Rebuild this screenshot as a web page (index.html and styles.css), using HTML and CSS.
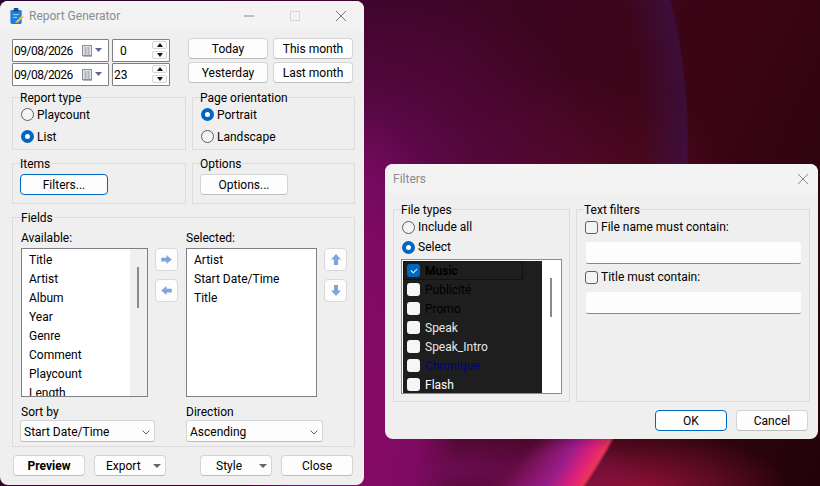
FILE: index.html
```html
<!DOCTYPE html>
<html lang="en">
<head>
  <meta charset="UTF-8">
  <title>Report Generator</title>
  <link rel="stylesheet" href="styles.css">
</head>
<body>
  <div class="desktop">
    <div class="lens"></div>
    <div class="lens-glow"></div>

    <!-- main window -->
    <div class="window report-window">
      <div class="titlebar">
        <svg class="app-icon" width="14" height="16" viewBox="0 0 14 17">
          <rect x="0" y="2" width="12" height="15" rx="1.500" fill="#1f7fd6"/>
          <rect x="3.500" y="0" width="5" height="4" rx="1" fill="#12508f"/>
          <path d="M3 7h6M3 10h4" stroke="#bcdcf5" stroke-width="1"/>
          <path d="M6 14l6-6 2 1.500-6 6-2.500 .5z" fill="#f6b73c"/>
        </svg>
        <span class="title">Report Generator</span>
        <div class="caption-btns">
          <svg width="12" height="12" viewBox="0 0 12 12"><path d="M1 6h10" stroke="#8a8a8a"/></svg>
          <svg width="12" height="12" viewBox="0 0 12 12"><rect x="1.500" y="1.500" width="9" height="9" fill="none" stroke="#d6d6d6"/></svg>
          <svg width="12" height="12" viewBox="0 0 12 12"><path d="M1 1l10 10M11 1L1 11" stroke="#777"/></svg>
        </div>
      </div>

      <div class="report-body">
        <div class="date-row">
          <div class="date-inputs">
            <div class="date-line">
              <div class="field date-field"><span class="date-text">09/08/2026</span>
                <svg class="cal" width="21" height="12" viewBox="0 0 21 12">
                  <rect x="0.500" y="0.500" width="9" height="10" fill="#dfe3ea" stroke="#8b8f99"/>
                  <path d="M2 3h6M2 5h6M2 7h6M2 9h6M3.500 2v8M6.500 2v8" stroke="#a9adb8" stroke-width=".8"/>
                  <path d="M10 11.500h-9" stroke="#b5b5b5"/>
                  <path d="M13 3h7l-3.500 4z" fill="#5a6a8c"/>
                </svg>
              </div>
              <div class="field spin-field"><span class="hour-zero">0</span>
                <div class="spin"><div class="spin-btn"><i class="up"></i></div><div class="spin-btn"><i class="down"></i></div></div>
              </div>
            </div>
            <div class="date-line">
              <div class="field date-field"><span class="date-text">09/08/2026</span>
                <svg class="cal" width="21" height="12" viewBox="0 0 21 12">
                  <rect x="0.500" y="0.500" width="9" height="10" fill="#dfe3ea" stroke="#8b8f99"/>
                  <path d="M2 3h6M2 5h6M2 7h6M2 9h6M3.500 2v8M6.500 2v8" stroke="#a9adb8" stroke-width=".8"/>
                  <path d="M10 11.500h-9" stroke="#b5b5b5"/>
                  <path d="M13 3h7l-3.500 4z" fill="#5a6a8c"/>
                </svg>
              </div>
              <div class="field spin-field"><span>23</span>
                <div class="spin"><div class="spin-btn"><i class="up"></i></div><div class="spin-btn"><i class="down"></i></div></div>
              </div>
            </div>
          </div>
          <div class="quick-dates">
            <button class="btn">Today</button>
            <button class="btn">This month</button>
            <button class="btn">Yesterday</button>
            <button class="btn">Last month</button>
          </div>
        </div>

        <div class="group-row">
          <fieldset class="group radio-group">
            <legend>Report type</legend>
            <label class="radio"><i class="radio-mark"></i>Playcount</label>
            <label class="radio"><i class="radio-mark on"></i>List</label>
          </fieldset>
          <fieldset class="group radio-group">
            <legend>Page orientation</legend>
            <label class="radio"><i class="radio-mark on"></i>Portrait</label>
            <label class="radio"><i class="radio-mark"></i>Landscape</label>
          </fieldset>
        </div>

        <div class="group-row items-row">
          <fieldset class="group button-group">
            <legend>Items</legend>
            <button class="btn wide focus">Filters...</button>
          </fieldset>
          <fieldset class="group button-group">
            <legend>Options</legend>
            <button class="btn wide">Options...</button>
          </fieldset>
        </div>

        <fieldset class="group fields-group">
          <legend>Fields</legend>
          <div class="fields-grid">
            <div class="col-label">Available:</div>
            <div></div>
            <div class="col-label">Selected:</div>
            <div></div>

            <div class="listbox available">
              <ul>
                <li>Title</li><li>Artist</li><li>Album</li><li>Year</li>
                <li>Genre</li><li>Comment</li><li>Playcount</li><li>Length</li>
              </ul>
              <div class="scroll"><div class="thumb"></div></div>
            </div>
            <div class="move-btns">
              <button class="icon-btn"><svg width="11" height="9" viewBox="0 0 14 12"><path d="M0 3.500h7V0l7 6-7 6V8.500H0z" fill="#7ea6dc"/></svg></button>
              <button class="icon-btn"><svg width="11" height="9" viewBox="0 0 14 12"><path d="M14 3.500H7V0L0 6l7 6V8.500h7z" fill="#7ea6dc"/></svg></button>
            </div>
            <div class="listbox selected">
              <ul><li>Artist</li><li>Start Date/Time</li><li>Title</li></ul>
            </div>
            <div class="move-btns">
              <button class="icon-btn"><svg width="10" height="11" viewBox="0 0 12 14" preserveAspectRatio="none"><path d="M3.500 14V7H0l6-7 6 7H8.500v7z" fill="#7ea6dc"/></svg></button>
              <button class="icon-btn"><svg width="10" height="11" viewBox="0 0 12 14" preserveAspectRatio="none"><path d="M3.500 0v7H0l6 7 6-7H8.500V0z" fill="#7ea6dc"/></svg></button>
            </div>

            <div class="sort-col">
              <div class="col-label">Sort by</div>
              <div class="select sort-select">Start Date/Time<svg width="8" height="5" viewBox="0 0 8 5"><path d="M.5 .5L4 4 7.500 .5" fill="none" stroke="#666"/></svg></div>
            </div>
            <div></div>
            <div class="sort-col span-2">
              <div class="col-label">Direction</div>
              <div class="select direction-select">Ascending<svg width="8" height="5" viewBox="0 0 8 5"><path d="M.5 .5L4 4 7.500 .5" fill="none" stroke="#666"/></svg></div>
            </div>
          </div>
        </fieldset>

        <div class="footer-btns">
          <button class="btn foot bold">Preview</button>
          <button class="btn foot split">Export<i class="caret"></i></button>
          <button class="btn foot split style-btn">Style<i class="caret"></i></button>
          <button class="btn foot">Close</button>
        </div>
      </div>
    </div>

    <!-- filters dialog -->
    <div class="window filters-window">
      <div class="titlebar">
        <span class="title">Filters</span>
        <svg class="dialog-close" width="12" height="12" viewBox="0 0 12 12"><path d="M1 1l10 10M11 1L1 11" stroke="#8a8a8a"/></svg>
      </div>
      <div class="filters-body">
        <div class="filters-groups">
          <fieldset class="group types-group">
            <legend>File types</legend>
            <label class="radio"><i class="radio-mark"></i>Include all</label>
            <label class="radio"><i class="radio-mark on"></i>Select</label>
            <div class="listbox types-list">
              <ul class="dark-list">
                <li class="row-selected"><i class="check on"></i><b>Music</b></li>
                <li class="ink-black"><i class="check"></i>Publicité</li>
                <li class="ink-black"><i class="check"></i>Promo</li>
                <li><i class="check"></i>Speak</li>
                <li><i class="check"></i>Speak_Intro</li>
                <li class="ink-blue"><i class="check"></i>Chronique</li>
                <li class="ink-white"><i class="check"></i>Flash</li>
              </ul>
              <div class="scroll"><div class="thumb types-thumb"></div></div>
            </div>
          </fieldset>
          <fieldset class="group text-group">
            <legend>Text filters</legend>
            <label class="checkline"><i class="check outline"></i>File name must contain:</label>
            <div class="text-input"></div>
            <label class="checkline second"><i class="check outline"></i>Title must contain:</label>
            <div class="text-input"></div>
          </fieldset>
        </div>
        <div class="dialog-btns">
          <button class="btn foot focus">OK</button>
          <button class="btn foot">Cancel</button>
        </div>
      </div>
    </div>
  </div>
</body>
</html>
```

FILE: styles.css
```css
* {
  box-sizing: border-box;
  margin: 0;
  padding: 0;
  font-family: Roboto, sans-serif;
  font-size: 12px;
}

body {
  width: 820px;
  height: 486px;
  overflow: hidden;
}

/* wallpaper */
.desktop {
  position: relative;
  width: 820px;
  height: 486px;
  overflow: hidden;
  background:
    radial-gradient(ellipse 150px 60px at 640px 490px, #8e1036 0%, rgba(120, 15, 45, 0.6) 55%, rgba(90, 10, 30, 0) 100%),
    radial-gradient(ellipse 110px 320px at 350px 420px, #880a66 0%, #7e0a62 60%, rgba(110, 8, 85, 0) 100%),
    radial-gradient(ellipse 200px 60px at 460px 470px, rgba(110, 12, 85, 0.9) 0%, rgba(90, 12, 70, 0) 100%),
    radial-gradient(ellipse 90px 60px at 570px 500px, #a8188a 0%, rgba(130, 20, 110, 0.7) 55%, rgba(100, 20, 90, 0) 100%),
    radial-gradient(ellipse 250px 230px at 360px 190px, #6c0a5c 0%, rgba(90, 8, 70, 0.65) 50%, rgba(60, 5, 40, 0) 100%),
    radial-gradient(ellipse 170px 130px at 570px 200px, rgba(85, 10, 40, 0.9) 0%, rgba(70, 8, 30, 0) 100%),
    linear-gradient(115deg, #2c0430 0%, #3c0522 45%, #3c0514 72%, #22030a 100%);
}

.lens {
  position: absolute;
  inset: 0;
  background:
    radial-gradient(circle 610px at 79px 144px, rgba(60, 25, 100, 0) 92%, rgba(60, 25, 100, 0.45) 99.600%, rgba(60, 25, 100, 0) 100%);
}

.lens-glow {
  position: absolute;
  inset: 0;
  background:
    radial-gradient(circle 610px at 79px 144px, rgba(150, 30, 150, 0) 89%, #9a1c8a 95%, #e0207a 98%, #ea3658 99.700%, rgba(180, 20, 60, 0) 100.300%);
  -webkit-mask-image: linear-gradient(to bottom, transparent 400px, #000 450px);
  mask-image: linear-gradient(to bottom, transparent 400px, #000 450px);
}

.window {
  position: absolute;
  background: #efefef;
  border-radius: 8px;
  overflow: hidden;
  color: #000;
}

.report-window {
  left: 0;
  top: 1px;
  width: 364px;
  height: 484px;
}

.filters-window {
  left: 385px;
  top: 164px;
  width: 433px;
  height: 275px;
}

.titlebar {
  height: 30px;
  background: #f3f3f3;
  display: flex;
  align-items: center;
  padding-left: 10px;
}

.title {
  color: #8c8c8c;
  margin-left: 5px;
}

.filters-window .titlebar {
  height: 29px;
  padding-left: 3px;
  justify-content: space-between;
  padding-right: 9px;
}

.caption-btns {
  margin-left: auto;
  margin-right: 17px;
  display: flex;
  gap: 34px;
}

.report-body {
  padding: 7px 9px 0 12px;
}

.date-row {
  display: flex;
  justify-content: space-between;
}

.date-inputs {
  display: flex;
  flex-direction: column;
  gap: 1px;
  padding-top: 1px;
}

.date-line {
  display: flex;
  gap: 3px;
}

.field {
  height: 23px;
  background: #fff;
  border: 1px solid #7f7f86;
  border-radius: 1px;
  display: flex;
  align-items: center;
  padding-left: 1px;
}

.date-field {
  width: 97px;
  justify-content: space-between;
  padding-right: 5px;
}

.date-text {
  letter-spacing: -0.5px;
}

.cal {
  flex: none;
}

.spin-field {
  width: 58px;
  position: relative;
}

.hour-zero {
  margin-left: 6px;
}

.spin {
  position: absolute;
  right: 2px;
  top: 1px;
  display: flex;
  flex-direction: column;
  gap: 2px;
}

.spin-btn {
  width: 15px;
  height: 8px;
  border: 1px solid #d6d6d6;
  border-radius: 2px;
  background: #fdfdfd;
  display: flex;
  align-items: center;
  justify-content: center;
}

.spin-btn i {
  width: 0;
  height: 0;
  border-left: 3.500px solid transparent;
  border-right: 3.500px solid transparent;
}

.spin-btn .up {
  border-bottom: 4px solid #111;
}

.spin-btn .down {
  border-top: 4px solid #111;
}

.btn {
  background: #fdfdfd;
  border: 1px solid #d4d4d4;
  border-bottom-color: #bdbdbd;
  border-radius: 4px;
  color: #000;
  text-align: center;
  flex: none;
}

.btn.focus {
  border: 1px solid #0067c0;
}

.quick-dates {
  display: grid;
  grid-template-columns: 80px 80px;
  grid-auto-rows: 21px;
  gap: 3px 5px;
  margin-right: 2px;
}

.group-row {
  display: flex;
  gap: 6px;
  margin-top: 5px;
}

.items-row {
  margin-top: 7px;
}

.group {
  border: 1px solid #dcdcdc;
  padding: 0 7px;
  min-width: 0;
  flex: none;
}

.group legend {
  padding: 0;
  height: 12px;
  line-height: 14px;
}

.group-row .group:first-child {
  width: 174px;
}

.group-row .group:last-child {
  width: 163px;
}

.radio-group {
  height: 59px;
  padding-top: 0;
}

.radio {
  display: flex;
  align-items: center;
  gap: 3px;
  height: 22px;
  margin-left: 1px;
}

.radio-group .radio {
  padding-top: 2px;
}

.radio-group .radio-mark {
  margin-top: -2px;
}

.radio-mark {
  width: 13px;
  height: 13px;
  border-radius: 50%;
  border: 1px solid #5f5f5f;
  background: #f4f4f4;
  flex: none;
}

.radio-mark.on {
  border: 4px solid #0067c0;
  background: #fff;
}

.button-group {
  height: 47px;
}

.wide {
  width: 88px;
  height: 21px;
  display: block;
  margin-top: 5px;
}

.fields-group {
  margin-top: 7px;
  height: 236px;
  padding-left: 8px;
}

.fields-grid {
  display: grid;
  grid-template-columns: 127px 38px 131px 30px;
  grid-template-rows: 19px 149px auto;
  padding-top: 6px;
}

.col-label {
  height: 17px;
  line-height: 19px;
}

.listbox {
  background: #fff;
  border: 1px solid #7f7f86;
  position: relative;
  overflow: hidden;
}

.listbox ul {
  list-style: none;
}

.available ul,
.selected ul {
  padding-top: 2px;
}

.available li,
.selected li {
  height: 19px;
  line-height: 19px;
  padding-left: 7px;
}

.scroll {
  position: absolute;
  right: 0;
  top: 0;
  bottom: 0;
  width: 17px;
  background: #f0f0f0;
}

.thumb {
  position: absolute;
  left: 7px;
  top: 18px;
  width: 2px;
  height: 41px;
  background: #8a8a8a;
}

.move-btns {
  display: flex;
  flex-direction: column;
  gap: 8px;
  padding-left: 7px;
}

.icon-btn {
  width: 23px;
  height: 23px;
  background: #fdfdfd;
  border: 1px solid #d8d8d8;
  border-radius: 4px;
  display: flex;
  align-items: center;
  justify-content: center;
}

.sort-col {
  padding-top: 6px;
}

.span-2 {
  grid-column: span 2;
}

.select {
  height: 22px;
  background: #fdfdfd;
  border: 1px solid #d4d4d4;
  border-bottom-color: #bdbdbd;
  border-radius: 3px;
  display: flex;
  align-items: center;
  justify-content: space-between;
  padding: 2px 4px 0 3px;
}

.sort-select {
  width: 135px;
  margin-left: -1px;
}

.direction-select {
  width: 137px;
}

.footer-btns {
  display: flex;
  margin-top: 8px;
  margin-left: 1px;
}

.foot {
  width: 72px;
  height: 21px;
}

.footer-btns .foot {
  margin-right: 9px;
}

.footer-btns .style-btn {
  margin-left: 25px;
  padding-left: 15px;
}

.bold {
  font-weight: 700;
}

.split {
  display: flex;
  align-items: center;
  justify-content: space-between;
  padding: 0 4px 0 11px;
}

.caret {
  width: 0;
  height: 0;
  border-left: 4px solid transparent;
  border-right: 4px solid transparent;
  border-top: 4px solid #666;
}

.filters-body {
  padding: 10px 8px 0 8px;
}

.filters-groups {
  display: flex;
  gap: 6px;
}

.types-group {
  width: 177px;
  height: 199px;
}

.text-group {
  width: 234px;
  height: 199px;
}

.types-group .radio {
  height: 20px;
}

.types-group .radio:first-of-type {
  margin-top: 2px;
}

.types-list {
  width: 161px;
  height: 135px;
  margin-top: 2px;
  padding: 1px;
  border-color: #8a8a90;
}

.dark-list {
  width: 140px;
  height: 132px;
  background: #1e1e1e;
  overflow: hidden;
}

.dark-list li {
  height: 19px;
  display: flex;
  align-items: center;
  gap: 5px;
  padding-left: 4px;
  color: #e8e8e8;
}

.dark-list .row-selected {
  width: 120px;
  border: 1px solid #111;
  padding-left: 3px;
  color: #000;
}

.dark-list b {
  color: #000;
}

.dark-list .ink-black {
  color: #000;
}

.dark-list .ink-blue {
  color: #00008c;
}

.dark-list .ink-white {
  color: #fff;
}

.check {
  width: 13px;
  height: 13px;
  border-radius: 3px;
  background: #f6f6f6;
  flex: none;
  display: block;
}

.check.on {
  background: #0067c0;
  position: relative;
}

.check.on::after {
  content: "";
  position: absolute;
  left: 5px;
  top: 3px;
  width: 3px;
  height: 5px;
  border: solid #e8f2fb;
  border-width: 0 1px 1px 0;
  transform: rotate(45deg);
}

.check.outline {
  border: 1px solid #5f5f5f;
  background: #f4f4f4;
}

.types-thumb {
  left: 8px;
  top: 18px;
  height: 39px;
}

.types-list .scroll {
  width: 19px;
  background: #fff;
}

.checkline {
  display: flex;
  align-items: center;
  gap: 3px;
  height: 20px;
  margin-left: 1px;
  margin-top: 2px;
}

.checkline.second {
  margin-top: 3px;
}

.text-input {
  width: 215px;
  height: 22px;
  margin-left: 2px;
  margin-top: 5px;
  background: #fdfdfd;
  border-bottom: 1px solid #8a8a8a;
  border-radius: 2px;
}

.dialog-btns {
  display: flex;
  justify-content: flex-end;
  gap: 9px;
  margin-top: 8px;
  margin-right: 2px;
}
```
